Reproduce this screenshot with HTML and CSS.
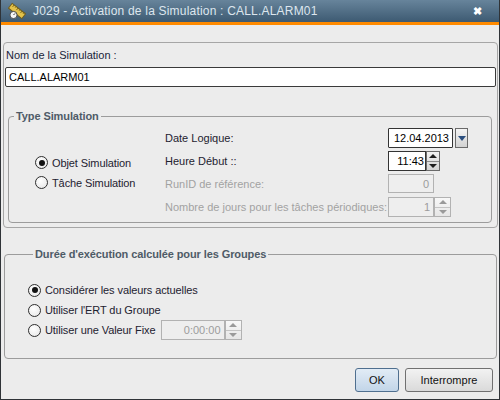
FILE: index.html
```html
<!DOCTYPE html>
<html lang="fr">
  <head>
    <meta charset="UTF-8" />
    <title>Activation de la Simulation</title>
    <link rel="stylesheet" href="styles.css">
  </head>
  <body>
    <div class="window">
      <div class="titlebar">
        <svg class="app-icon" width="18" height="18" viewBox="0 0 18 18">
          <g transform="rotate(38 9 9)">
            <rect x="0.5" y="6" width="17" height="6" fill="#e3c24a" stroke="#6e5c1c" stroke-width="1" />
            <path d="M3 6v2.5M5.5 6v1.5M8 6v2.5M10.5 6v1.5M13 6v2.5M15.5 6v1.5" stroke="#6e5c1c" stroke-width="0.8" />
          </g>
          <circle cx="5.5" cy="13" r="3.6" fill="#f6f6f6" stroke="#4a4a4a" stroke-width="1" />
          <path d="M5.5 13l1.6-1.6" stroke="#333" stroke-width="1" />
        </svg>
        <span class="title">J029 - Activation de la Simulation : CALL.ALARM01</span>
        <span class="close">&#10006;</span>
      </div>

      <div class="content">
        <div class="panel">
          <div class="field-label">Nom de la Simulation :</div>
          <div class="text-input">CALL.ALARM01</div>

          <fieldset class="group type-group">
            <legend>Type Simulation</legend>
            <div class="type-body">
              <div class="radio-list">
                <div class="radio checked"><span class="dot"></span>Objet Simulation</div>
                <div class="radio"><span class="dot"></span>Tâche Simulation</div>
              </div>
              <div class="param-grid">
                <span>Date Logique:</span>
                <div class="ctrl">
                  <div class="box date-box">12.04.2013</div>
                  <div class="drop-btn"><span class="tri-down blue"></span></div>
                </div>

                <span>Heure Début ::</span>
                <div class="ctrl">
                  <div class="box time-box">11:43</div>
                  <div class="spinner"><span><i class="tri-up"></i></span><span><i class="tri-down"></i></span></div>
                </div>

                <span class="disabled">RunID de référence:</span>
                <div class="ctrl">
                  <div class="box runid-box off">0</div>
                </div>

                <span class="disabled">Nombre de jours pour les tâches périodiques:</span>
                <div class="ctrl">
                  <div class="box days-box off">1</div>
                  <div class="spinner off"><span><i class="tri-up"></i></span><span><i class="tri-down"></i></span></div>
                </div>
              </div>
            </div>
          </fieldset>
        </div>

        <fieldset class="group duree-group">
          <legend>Durée d'exécution calculée pour les Groupes</legend>
          <div class="radio checked"><span class="dot"></span>Considérer les valeurs actuelles</div>
          <div class="radio"><span class="dot"></span>Utiliser l'ERT du Groupe</div>
          <div class="radio">
            <span class="dot"></span>Utiliser une Valeur Fixe
            <div class="ctrl fixe-ctrl">
              <div class="box fixe-box off">0:00:00</div>
              <div class="spinner off"><span><i class="tri-up"></i></span><span><i class="tri-down"></i></span></div>
            </div>
          </div>
        </fieldset>

        <div class="buttons">
          <button class="btn btn-ok">OK</button>
          <button class="btn btn-cancel">Interrompre</button>
        </div>
      </div>
    </div>
  </body>
</html>
```

FILE: styles.css
```css
body {
  margin: 0;
  font-family: "Liberation Sans", Arial, sans-serif;
  font-size: 11px;
  color: #1e2230;
}
.window {
  width: 500px;
  height: 400px;
  box-sizing: border-box;
  border: 1px solid #2f3337;
  border-top: none;
  background: #ececec;
  display: flex;
  flex-direction: column;
}
.titlebar {
  height: 22px;
  display: flex;
  align-items: center;
  padding-left: 7px;
  background: linear-gradient(#67849b, #3d5a72);
  border-bottom: 3px solid #ff8a00;
  color: #dde6ee;
  font-size: 12px;
}
.app-icon {
  margin-right: 7px;
}
.title {
  flex: 1;
  letter-spacing: 0.2px;
}
.close {
  color: #fff;
  font-size: 11px;
  font-weight: bold;
  margin-right: 17px;
}
.content {
  flex: 1;
  display: flex;
  flex-direction: column;
}
.panel {
  margin: 17px 1px 0 2px;
  padding: 5px 1px 4px;
  border: 1px solid #a6a6a6;
  border-radius: 4px;
}
.field-label {
  line-height: 14px;
  margin: 0 0 5px 1px;
  color: #1a1f3a;
}
.text-input {
  height: 20px;
  box-sizing: border-box;
  padding: 0 3px;
  line-height: 18px;
  border: 1px solid #3a3a3a;
  border-radius: 2px;
  background: #fff;
  color: #000;
}
.group {
  border: 1px solid #9c9c9c;
  border-radius: 4px;
  padding: 0;
  min-width: 0;
}
.group legend {
  margin-left: 5px;
  padding: 0 2px;
  line-height: 14px;
  font-weight: bold;
  letter-spacing: -0.1px;
  color: #4f5b67;
}
.type-group {
  margin: 22px 4px 0 3px;
}
.type-body {
  display: flex;
  padding: 5px 0;
}
.radio-list {
  width: 156px;
  box-sizing: border-box;
  padding-left: 26px;
  display: flex;
  flex-direction: column;
  justify-content: center;
}
.radio {
  display: flex;
  align-items: center;
  height: 20px;
  gap: 4px;
  letter-spacing: -0.1px;
}
.dot {
  width: 11px;
  height: 11px;
  border: 1px solid #2e2e2e;
  border-radius: 50%;
  background: radial-gradient(circle at 40% 35%, #fff, #e4e4e4);
  display: flex;
  align-items: center;
  justify-content: center;
}
.checked .dot::after {
  content: "";
  width: 6px;
  height: 6px;
  border-radius: 50%;
  background: #111;
}
.param-grid {
  display: grid;
  grid-template-columns: 223px auto;
  grid-auto-rows: 20px;
  row-gap: 3px;
  align-items: center;
}
.disabled {
  color: #a2a2a2;
}
.ctrl {
  display: flex;
  height: 20px;
}
.box {
  height: 20px;
  box-sizing: border-box;
  border: 1px solid #333;
  background: #fff;
  color: #000;
  text-align: right;
  line-height: 18px;
  padding-right: 3px;
}
.box.off {
  border-color: #b2b2b2;
  background: #eeeeee;
  color: #9c9c9c;
}
.date-box {
  width: 65px;
  border-radius: 1px;
}
.time-box {
  width: 38px;
  padding-right: 1px;
}
.runid-box {
  width: 46px;
  height: 19px;
  padding-right: 4px;
}
.days-box {
  width: 46px;
}
.fixe-box {
  width: 64px;
  letter-spacing: 0;
}
.drop-btn {
  width: 13px;
  height: 20px;
  box-sizing: border-box;
  margin-left: 2px;
  border: 1px solid #6a6a6a;
  background: linear-gradient(#f4f4f4, #d2d2d2);
  display: flex;
  align-items: center;
  justify-content: center;
}
.spinner {
  width: 14px;
  height: 20px;
  box-sizing: border-box;
  border: 1px solid #6a6a6a;
  background: linear-gradient(#f2f2f2, #d4d4d4);
  display: flex;
  flex-direction: column;
}
.spinner span {
  flex: 1;
  display: flex;
  align-items: center;
  justify-content: center;
}
.spinner span + span {
  border-top: 1px solid #8a8a8a;
}
.spinner.off {
  width: 17px;
  border-color: #b2b2b2;
  background: linear-gradient(#f8f8f8, #e6e6e6);
}
.spinner.off span + span {
  border-top-color: #c4c4c4;
}
.tri-up,
.tri-down {
  width: 0;
  height: 0;
  border-left: 4px solid transparent;
  border-right: 4px solid transparent;
}
.tri-up {
  border-bottom: 4px solid #1e1e1e;
}
.tri-down {
  border-top: 4px solid #1e1e1e;
}
.tri-down.blue {
  border-top: 5px solid #2b4e7e;
}
.off .tri-up {
  border-bottom-color: #9a9a9a;
}
.off .tri-down {
  border-top-color: #9a9a9a;
}
.duree-group {
  margin: 19px 2px 0 3px;
  padding: 19px 0 18px 23px;
}
.fixe-ctrl {
  margin-left: 1px;
}
.buttons {
  display: flex;
  justify-content: flex-end;
  gap: 6px;
  padding: 9px 6px 0 0;
}
.btn {
  height: 24px;
  padding: 0;
  font: inherit;
  color: #111;
  border: 1px solid #707070;
  border-radius: 3px;
  background: linear-gradient(#f2f2f2, #dadada);
}
.btn-ok {
  width: 44px;
  border-color: #4f6f8f;
  background: linear-gradient(#e2ecf6, #c2d5e8);
}
.btn-cancel {
  width: 88px;
}
```
